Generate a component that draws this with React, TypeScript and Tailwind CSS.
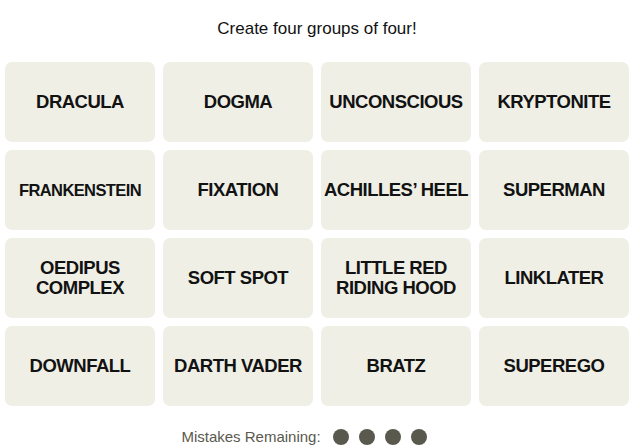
const words = [
  "DRACULA",
  "DOGMA",
  "UNCONSCIOUS",
  "KRYPTONITE",
  "FRANKENSTEIN",
  "FIXATION",
  "ACHILLES’ HEEL",
  "SUPERMAN",
  "OEDIPUS COMPLEX",
  "SOFT SPOT",
  "LITTLE RED RIDING HOOD",
  "LINKLATER",
  "DOWNFALL",
  "DARTH VADER",
  "BRATZ",
  "SUPEREGO",
];

const Tile = ({ word }: { word: string }) => {
  const small = word === "FRANKENSTEIN";
  return (
    <button
      className={
        "h-[80px] rounded-[7px] bg-[#efefe6] flex items-center justify-center text-center font-bold uppercase text-[#121212] leading-[20px] px-0 " +
        (small ? "text-[16.5px] tracking-[-0.6px]" : "text-[18.5px] tracking-[-0.5px]")
      }
    >
      {word}
    </button>
  );
};

export default function App() {
  return (
    <div
      className="w-[634px] h-[448px] bg-white overflow-hidden flex flex-col items-center"
      style={{ fontFamily: '"Liberation Sans", Arial, sans-serif' }}
    >
      <p className="mt-[18px] h-[22px] leading-[22px] text-[17px] text-[#121212]">
        Create four groups of four!
      </p>

      <div className="mt-[22px] w-[624px] grid grid-cols-4 gap-[8px]">
        {words.map((w) => (
          <Tile key={w} word={w} />
        ))}
      </div>

      <div className="mt-[20px] mr-[26px] h-[22px] flex items-center gap-[12px] text-[15px] text-[#5a594e]">
        <span>Mistakes Remaining:</span>
        <div className="flex items-center gap-[10px]">
          {[0, 1, 2, 3].map((i) => (
            <span key={i} className="w-[16px] h-[16px] rounded-full bg-[#5a594e]" />
          ))}
        </div>
      </div>
    </div>
  );
}
